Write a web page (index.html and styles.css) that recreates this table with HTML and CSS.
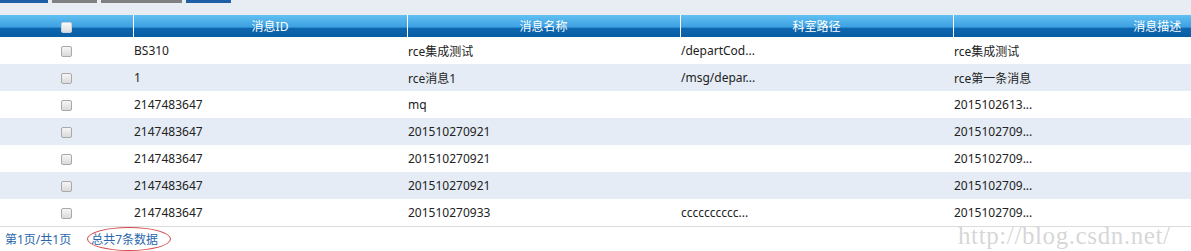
FILE: index.html
```html
<!DOCTYPE html>
<html lang="zh-CN">
<head>
    <meta charset="UTF-8">
    <title>消息列表</title>
    <link rel="stylesheet" href="styles.css">
</head>
<body>

<div class="toolbar">
    <span class="tool blue" style="width: 48px"></span>
    <span class="tool gray" style="width: 45px"></span>
    <span class="tool gray" style="width: 81px"></span>
    <span class="tool blue" style="width: 45px"></span>
</div>

<div class="grid">
    <table>
        <colgroup>
            <col style="width: 133px">
            <col style="width: 274px">
            <col style="width: 273px">
            <col style="width: 273px">
            <col style="width: 408px">
        </colgroup>
        <thead>
            <tr>
                <th><input type="checkbox" class="chk head-chk"></th>
                <th>消息ID</th>
                <th>消息名称</th>
                <th>科室路径</th>
                <th>消息描述</th>
            </tr>
        </thead>
        <tbody>
            <tr>
                <td class="check"><input type="checkbox" class="chk"></td>
                <td>BS310</td>
                <td>rce集成测试</td>
                <td>/departCod...</td>
                <td>rce集成测试</td>
            </tr>
            <tr class="alt">
                <td class="check"><input type="checkbox" class="chk"></td>
                <td>1</td>
                <td>rce消息1</td>
                <td>/msg/depar...</td>
                <td>rce第一条消息</td>
            </tr>
            <tr>
                <td class="check"><input type="checkbox" class="chk"></td>
                <td>2147483647</td>
                <td>mq</td>
                <td></td>
                <td>2015102613...</td>
            </tr>
            <tr class="alt">
                <td class="check"><input type="checkbox" class="chk"></td>
                <td>2147483647</td>
                <td>201510270921</td>
                <td></td>
                <td>2015102709...</td>
            </tr>
            <tr>
                <td class="check"><input type="checkbox" class="chk"></td>
                <td>2147483647</td>
                <td>201510270921</td>
                <td></td>
                <td>2015102709...</td>
            </tr>
            <tr class="alt">
                <td class="check"><input type="checkbox" class="chk"></td>
                <td>2147483647</td>
                <td>201510270921</td>
                <td></td>
                <td>2015102709...</td>
            </tr>
            <tr>
                <td class="check"><input type="checkbox" class="chk"></td>
                <td>2147483647</td>
                <td>201510270933</td>
                <td>cccccccccc...</td>
                <td>2015102709...</td>
            </tr>
        </tbody>
    </table>
</div>

<div class="pager">
    <span>第1页/共1页</span>
    <span class="total">总共7条数据</span>
</div>

<div class="watermark">http://blog.csdn.net/</div>

</body>
</html>
```

FILE: styles.css
```css
body {
    margin: 0;
    font-family: "Noto Sans", "Noto Sans CJK SC", sans-serif;
    font-size: 12px;
    color: #222;
    background: #fff;
    position: relative;
    overflow: hidden;
}
.toolbar {
    height: 15px;
    background: #e8edf4;
    display: flex;
    align-items: flex-start;
    gap: 4px;
}
.tool {
    height: 3px;
}
.tool.blue {
    background: #1f5fa6;
}
.tool.gray {
    background: #808080;
}
.grid {
    overflow: hidden;
    width: 100%;
}
table {
    table-layout: fixed;
    border-collapse: collapse;
    width: 1361px;
}
th {
    height: 22px;
    padding: 0;
    font-weight: normal;
    color: #fff;
    text-align: center;
    background: linear-gradient(#62c0f2 0%, #3c9fe0 55%, #0d67ae 60%, #0a5ea4 100%);
    border-left: 1px solid #fff;
}
th:first-child {
    border-left: none;
}
td {
    height: 27px;
    padding: 0 0 0 1px;
    white-space: nowrap;
    overflow: hidden;
}
td.check {
    text-align: center;
    padding: 0;
}
tr.alt td {
    background: #e5ecf5;
}
tbody tr:last-child td {
    border-bottom: 1px solid #dcdcdc;
}
.chk {
    appearance: none;
    -webkit-appearance: none;
    width: 11px;
    height: 11px;
    margin: 0;
    vertical-align: middle;
    border: 1px solid #a9a9a9;
    border-radius: 2px;
    background: linear-gradient(#f6f6f6, #dadada);
}
.head-chk {
    border-color: #c9d3dc;
    background: linear-gradient(#fafafa, #dcdcdc);
}
.pager {
    display: flex;
    align-items: center;
    gap: 20px;
    height: 24px;
    padding-left: 5px;
    color: #2a66ad;
}
.total {
    position: relative;
}
.total::after {
    content: "";
    position: absolute;
    left: -4px;
    right: -13px;
    top: -3px;
    bottom: -3px;
    border: 1px solid #d24a4a;
    border-radius: 50%;
}
.watermark {
    position: absolute;
    left: 958px;
    top: 222px;
    font-family: "Liberation Serif", serif;
    font-size: 25px;
    letter-spacing: 0.6px;
    color: rgba(150, 150, 150, 0.4);
}
```
